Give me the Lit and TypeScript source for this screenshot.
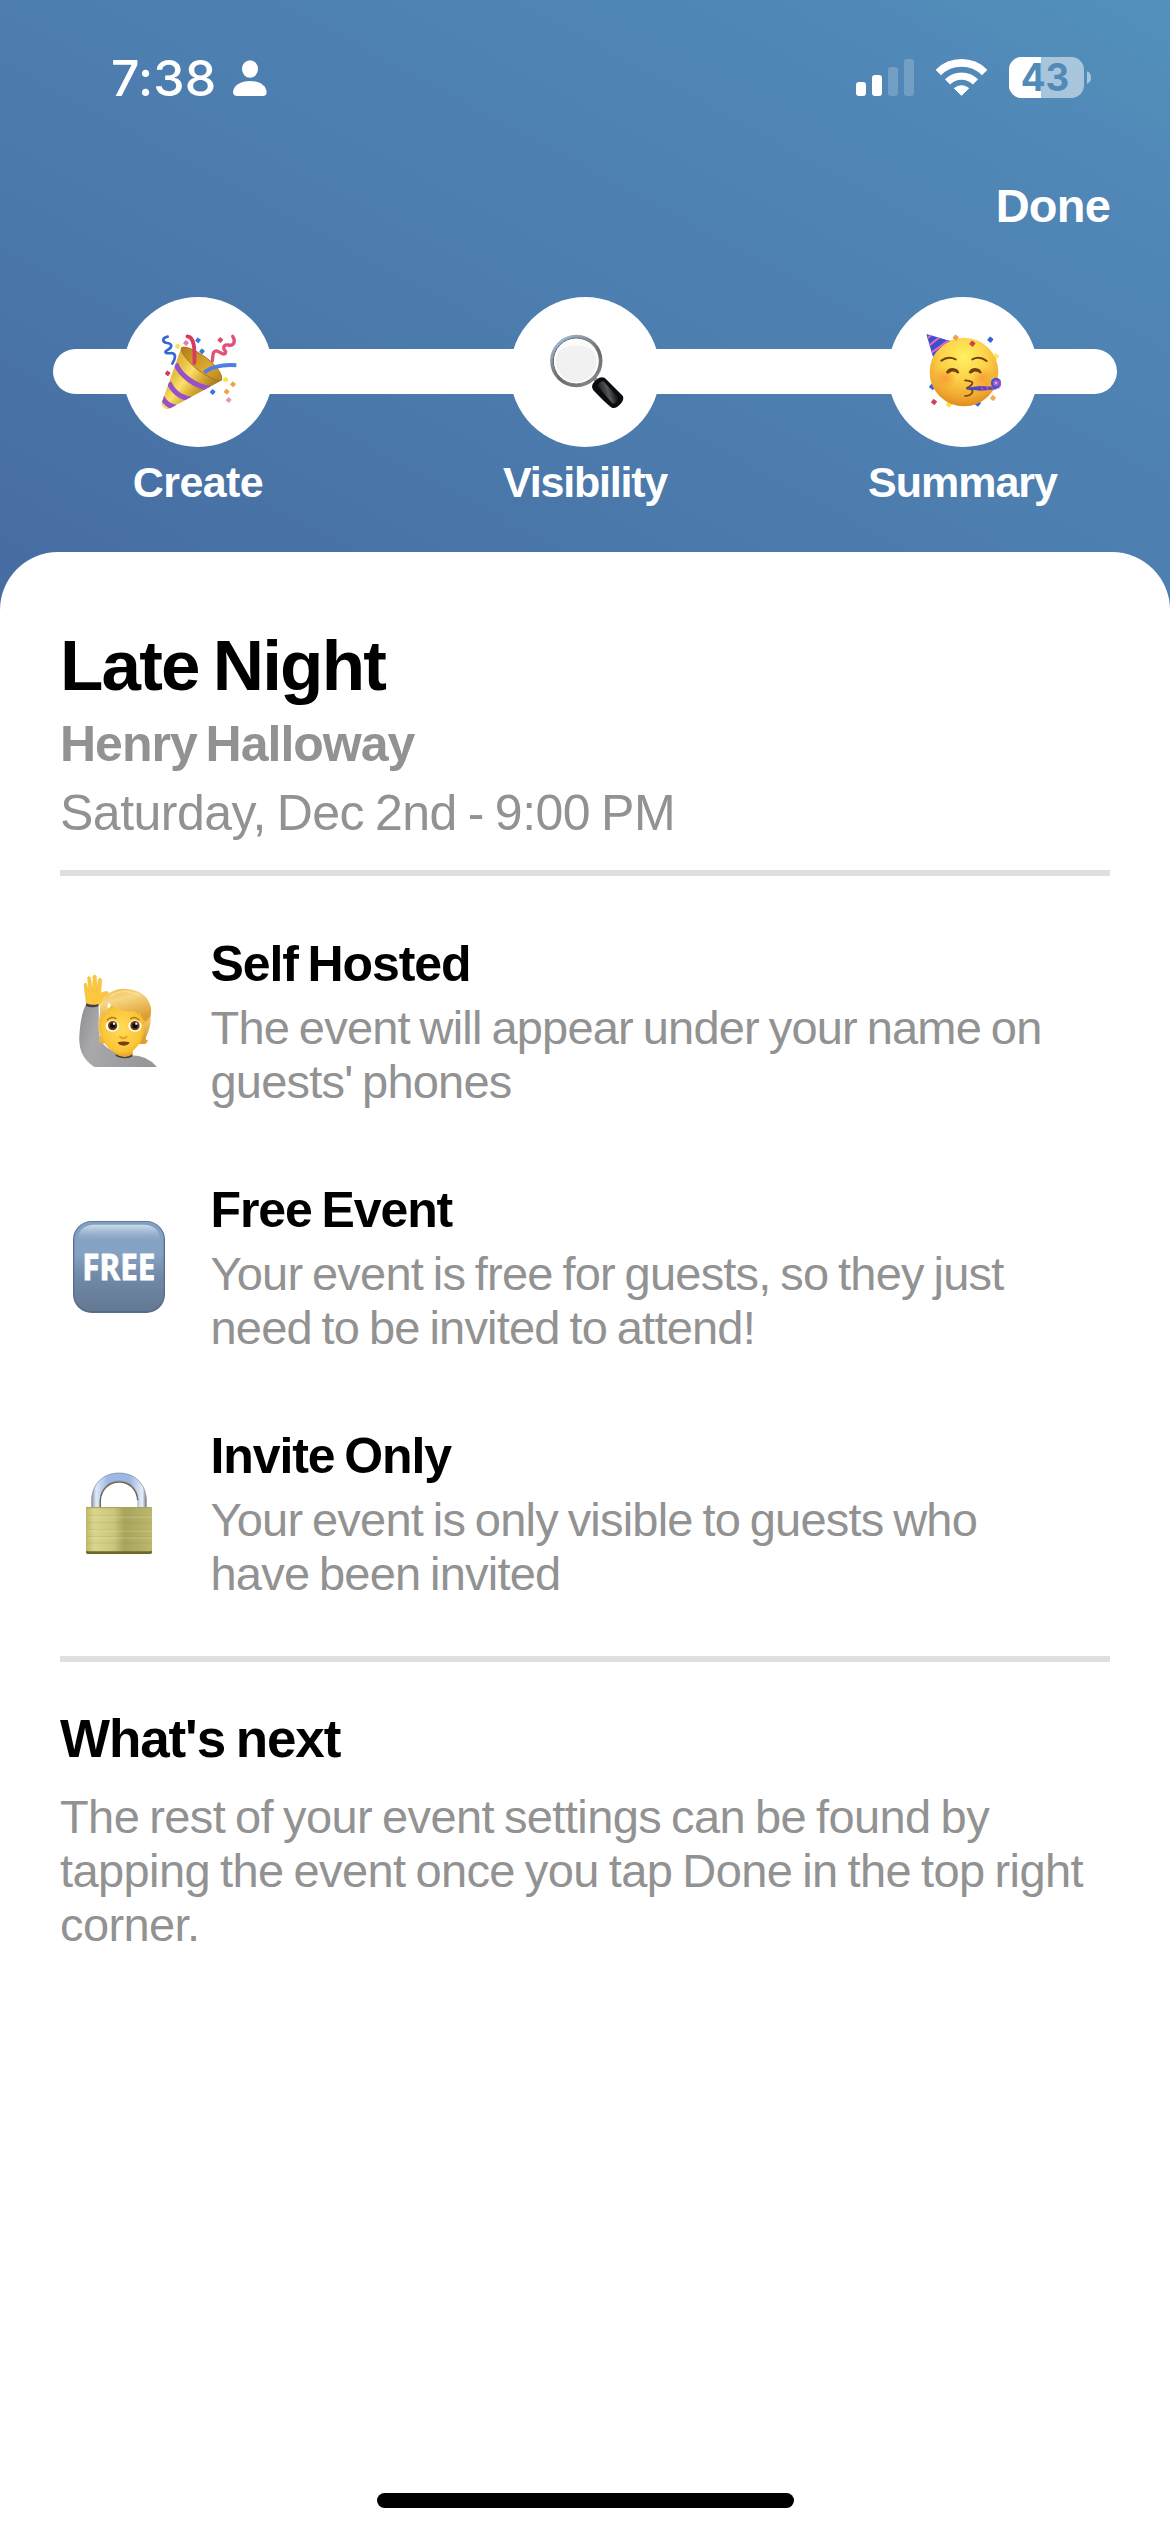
import { LitElement, html, css, svg } from "lit";
import { customElement } from "lit/decorators.js";

const confetti = (points: [number, number, string][], s = 12) =>
  points.map(
    ([x, y, c]) =>
      svg`<rect x=${x - s / 2} y=${y - s / 2} width=${s} height=${s} rx="2" fill=${c} transform="rotate(38 ${x} ${y})"></rect>`
  );

const popper = html`<svg class="art" viewBox="8 20 450 450">
  <defs>
    <linearGradient id="cone" x1="0" y1="0.1" x2="0.9" y2="0.8">
      <stop offset="0" stop-color="#c99524" />
      <stop offset="0.35" stop-color="#e9c244" />
      <stop offset="0.5" stop-color="#fbe06a" />
      <stop offset="0.68" stop-color="#d9ab33" />
      <stop offset="1" stop-color="#8d6312" />
    </linearGradient>
    <linearGradient id="mouth" x1="0" y1="0" x2="1" y2="1">
      <stop offset="0" stop-color="#b27c1c" />
      <stop offset="0.6" stop-color="#dca832" />
      <stop offset="1" stop-color="#b98320" />
    </linearGradient>
    <clipPath id="coneClip"><path d="M183 172 C196 215 250 262 302 271 L150 354 C138 360 122 350 124 337 Z" /></clipPath>
  </defs>
  <path d="M183 172 C196 215 250 262 302 271 L150 354 C138 360 122 350 124 337 Z" fill="url(#cone)" />
  <g clip-path="url(#coneClip)" fill="none" stroke="#9650cc" stroke-width="15">
    <path d="M166 220 C180 255 225 290 270 294" />
    <path d="M146 276 C156 302 180 322 212 326" />
    <path d="M124 318 C132 336 144 347 166 351" />
  </g>
  <path d="M183 172 C196 164 240 186 272 214 C296 236 308 258 303 270 C292 274 250 256 218 226 C198 206 180 184 183 172Z" fill="url(#mouth)" stroke="#a87517" stroke-width="3" />
  <path d="M201 138 C222 140 224 172 222 218" fill="none" stroke="#d93a5f" stroke-width="11" stroke-linecap="round" />
  <path d="M252 246 C274 230 308 222 348 225" fill="none" stroke="#4f7fe3" stroke-width="12" />
  <path d="M142 139 C126 142 124 156 140 158 C158 160 156 172 140 180 C128 188 140 190 154 188 C168 190 166 204 156 220" fill="none" stroke="#3566d6" stroke-width="8" stroke-linecap="round" />
  <path d="M337 138 C346 152 342 168 324 164 C306 162 308 176 316 184 C314 198 304 188 290 182 C276 180 278 196 276 212" fill="none" stroke="#e25277" stroke-width="10" stroke-linecap="round" />
  ${confetti([[172, 168, "#f8e04b"], [197, 158, "#ee7ba4"], [233, 150, "#3c78e0"], [245, 183, "#3c78e0"], [300, 149, "#dd4a6b"], [142, 249, "#d53d5c"], [316, 268, "#fae04c"], [338, 282, "#f3a03f"], [319, 304, "#f3a03f"], [277, 305, "#3b74dd"], [325, 329, "#ef8fc0"]], 13)}
</svg>`;

const magnifier = html`<svg class="art" viewBox="0 20 450 450">
  <defs>
    <linearGradient id="rim" x1="0.1" y1="0" x2="0.8" y2="1">
      <stop offset="0" stop-color="#9fc0ee" />
      <stop offset="0.3" stop-color="#8b949f" />
      <stop offset="0.6" stop-color="#66686b" />
      <stop offset="1" stop-color="#85878a" />
    </linearGradient>
    <linearGradient id="grip" x1="0" y1="0.6" x2="1" y2="0.3">
      <stop offset="0" stop-color="#08090a" />
      <stop offset="0.5" stop-color="#55585c" />
      <stop offset="0.8" stop-color="#17181a" />
      <stop offset="1" stop-color="#000" />
    </linearGradient>
  </defs>
  <path d="M250 262 L268 278" stroke="#8a8c8f" stroke-width="13" />
  <circle cx="199" cy="212" r="74" fill="#fff" stroke="url(#rim)" stroke-width="9" />
  <circle cx="199" cy="212" r="69" fill="#fdfdfd" stroke="#4b4e52" stroke-width="2.5" />
  <circle cx="199" cy="214" r="61" fill="#f1f1f2" />
  <path d="M147 182 A61 61 0 0 1 252 184 C222 160 180 160 147 182Z" fill="#fbfbfb" />
  <path d="M246 288 Q246 276 268 262 Q282 258 290 268 L338 316 Q344 326 332 340 Q318 356 306 352 Q298 350 250 300 Q246 294 246 288Z" fill="#0b0c0d" />
  <path d="M262 286 Q268 274 280 272 L326 322 Q320 338 308 340Z" fill="url(#grip)" />
</svg>`;

const partyFace = html`<svg class="art" viewBox="23 20 450 450">
  <defs>
    <radialGradient id="skin" cx="0.5" cy="0.28" r="0.75">
      <stop offset="0" stop-color="#fff05f" />
      <stop offset="0.45" stop-color="#fcd148" />
      <stop offset="0.8" stop-color="#f0a52f" />
      <stop offset="1" stop-color="#d98519" />
    </radialGradient>
    <radialGradient id="blush"><stop offset="0" stop-color="#f58a2c" stop-opacity="0.6" /><stop offset="1" stop-color="#f58a2c" stop-opacity="0" /></radialGradient>
    <clipPath id="hat"><path d="M138 131 L210 152 Q178 166 158 200 Z" /></clipPath>
  </defs>
  ${confetti([[156, 289, "#3568d4"], [206, 342, "#f8e04b"], [292, 339, "#3568d4"], [347, 198, "#fae868"]], 15)}
  <circle cx="251" cy="245" r="103" fill="url(#skin)" />
  <circle cx="196" cy="262" r="32" fill="url(#blush)" />
  <circle cx="306" cy="262" r="32" fill="url(#blush)" />
  <g clip-path="url(#hat)">
    <rect x="130" y="125" width="90" height="80" fill="#3b51c9" />
    <path d="M134 150 L160 128 M138 172 L186 134 M146 192 L214 144" stroke="#ee62c8" stroke-width="6" />
  </g>
  <g fill="none" stroke="#70400e" stroke-linecap="round">
    <path d="M183 211 Q203 196 226 207" stroke-width="6" />
    <path d="M276 207 Q298 196 319 212" stroke-width="6" />
  </g>
  <path d="M197 246 Q202 233 217 233 Q233 234 237 247 Q232 252 226 246 Q217 240 208 247 Q200 253 197 246Z" fill="#70400e" />
  <path d="M265 246 Q270 233 285 233 Q300 234 304 247 Q300 252 294 246 Q285 240 276 247 Q268 253 265 246Z" fill="#70400e" />
  <path d="M254 270 Q282 272 275 282 Q268 290 258 294 Q280 296 276 306 Q270 317 254 317" fill="none" stroke="#70400e" stroke-width="5" stroke-linecap="round" />
  <path d="M258 292 L300 287 L346 290 L350 297 L300 301 L262 297Z" fill="#4848c4" />
  <path d="M302 288 l6 12 M318 288 l6 11 M334 289 l5 10" stroke="#c944a9" stroke-width="5" />
  <circle cx="347" cy="278" r="12" fill="#8b7ae0" stroke="#3f57c8" stroke-width="7" />
  <circle cx="347" cy="278" r="5" fill="#f39ad0" stroke="#d84fb0" stroke-width="3" />
  <path d="M357 268 Q366 284 352 295" fill="none" stroke="#b94ec0" stroke-width="4" />
  ${confetti([[226, 142, "#f3a04a"], [276, 160, "#d63c50"], [330, 148, "#3764cf"], [338, 323, "#f7a852"], [161, 335, "#d13d5b"]], 14)}
</svg>`;

const raisingHand = html`<svg class="art" viewBox="0 0 360 360">
  <defs>
    <linearGradient id="sleeve" x1="0" y1="0" x2="1" y2="0.25">
      <stop offset="0" stop-color="#8d8d90" />
      <stop offset="0.3" stop-color="#a9a9ab" />
      <stop offset="1" stop-color="#97979a" />
    </linearGradient>
    <radialGradient id="face" cx="0.5" cy="0.5" r="0.6">
      <stop offset="0" stop-color="#ffdc57" />
      <stop offset="0.7" stop-color="#fbc638" />
      <stop offset="1" stop-color="#eaa423" />
    </radialGradient>
    <linearGradient id="hair" x1="0" y1="0" x2="0.4" y2="1">
      <stop offset="0" stop-color="#efb949" />
      <stop offset="0.4" stop-color="#f8d684" />
      <stop offset="1" stop-color="#dd9f32" />
    </linearGradient>
  </defs>
  <path d="M80 134 L72 76 Q72 68 79 70 L86 94 L83 54 Q84 46 91 52 L98 92 L99 48 Q104 42 109 49 L110 92 L115 58 Q120 50 125 59 L122 100 Q134 92 145 96 Q146 102 134 110 Q124 132 112 140Z" fill="#fbc83d" stroke="#eeb12a" stroke-width="1.5" />
  <path d="M79 132 Q96 144 116 134 L117 220 Q120 256 160 274 Q180 290 208 286 Q260 284 291 321 L103 321 Q54 290 58 228 Q62 160 79 132Z" fill="url(#sleeve)" />
  <path d="M79 130 Q96 138 115 132 L115 139 Q96 145 78 138Z" fill="#3b3e46" />
  <path d="M122 150 Q110 200 120 230 Q110 250 126 250 L250 252 Q260 254 264 240 Q256 244 258 232 Q276 196 272 150Z" fill="url(#hair)" />
  <path d="M164 270 L166 284 Q196 302 218 284 L218 266Z" fill="#edab2b" />
  <path d="M166 282 Q196 300 218 282 L216 290 Q192 300 168 289Z" fill="#3f4249" />
  <path d="M128 164 Q118 178 117 196 Q120 242 148 266 Q188 298 224 268 Q248 246 253 206 Q258 166 240 150 L160 130Z" fill="url(#face)" />
  <path d="M122 166 Q112 120 146 100 Q166 86 190 86 Q262 88 273 144 Q276 170 258 186 Q246 178 240 156 L236 164 Q232 158 220 154 Q174 158 145 128 Q138 140 150 164 Q136 154 122 166Z" fill="url(#hair)" />
  <path d="M152 108 Q190 82 236 106" fill="none" stroke="#fde2a3" stroke-width="5" opacity="0.7" />
  <path d="M142 180 Q153 168 168 176 M212 176 Q226 168 237 180" fill="none" stroke="#b4781c" stroke-width="4.5" stroke-linecap="round" />
  <ellipse cx="157" cy="198" rx="20" ry="17" fill="#fff" />
  <ellipse cx="225" cy="198" rx="20" ry="17" fill="#fff" />
  <circle cx="158" cy="197" r="14" fill="#6b3c18" /><circle cx="225" cy="197" r="14" fill="#6b3c18" />
  <circle cx="158" cy="197" r="8" fill="#100904" /><circle cx="225" cy="197" r="8" fill="#100904" />
  <circle cx="162" cy="191" r="3.5" fill="#fff" /><circle cx="229" cy="191" r="3.5" fill="#fff" />
  <path d="M180 230 Q190 240 200 230" fill="none" stroke="#e39b22" stroke-width="5" stroke-linecap="round" />
  <path d="M173 247 Q191 242 209 247 Q205 257 191 257 Q177 257 173 247Z" fill="#7a3b10" />
</svg>`;

const freeBadge = html`<svg class="art" viewBox="0 3 360 360">
  <defs>
    <linearGradient id="tile" x1="0" y1="0" x2="0" y2="1">
      <stop offset="0" stop-color="#7f9fc4" />
      <stop offset="0.35" stop-color="#86a3c4" />
      <stop offset="0.62" stop-color="#7089a8" />
      <stop offset="1" stop-color="#647993" />
    </linearGradient>
    <linearGradient id="gloss" x1="0" y1="0" x2="0" y2="1">
      <stop offset="0" stop-color="#d3dfec" stop-opacity="0.95" />
      <stop offset="1" stop-color="#a9c0db" stop-opacity="0" />
    </linearGradient>
  </defs>
  <rect x="39" y="48" width="276" height="276" rx="56" fill="#566d8c" />
  <rect x="43" y="50" width="268" height="268" rx="52" fill="url(#tile)" />
  <path d="M54 108 Q54 62 100 59 L254 59 Q300 62 300 108 Q240 102 177 102 Q114 102 54 108Z" fill="url(#gloss)" />
  <text class="free" x="67" y="224" textLength="219" lengthAdjust="spacingAndGlyphs">FREE</text>
</svg>`;

const padlock = html`<svg class="art" viewBox="0 -9 360 360">
  <defs>
    <linearGradient id="brass" x1="0" y1="0" x2="1" y2="0">
      <stop offset="0" stop-color="#bdb867" />
      <stop offset="0.12" stop-color="#d9d58e" />
      <stop offset="0.42" stop-color="#cbc67c" />
      <stop offset="0.58" stop-color="#a8a45e" />
      <stop offset="1" stop-color="#bcb76c" />
    </linearGradient>
    <linearGradient id="steel" x1="0" y1="0" x2="1" y2="0">
      <stop offset="0" stop-color="#8d949e" />
      <stop offset="0.08" stop-color="#dfe9fa" />
      <stop offset="0.3" stop-color="#9db8e6" />
      <stop offset="0.7" stop-color="#9db8e6" />
      <stop offset="0.93" stop-color="#e6edf8" />
      <stop offset="1" stop-color="#73787f" />
    </linearGradient>
  </defs>
  <path d="M95 160 L95 134 C97 84 132 54 177 54 C222 54 257 84 259 134 L259 160 L234 160 L234 136 C232 100 208 78 177 78 C146 78 122 100 120 136 L120 160Z" fill="url(#steel)" stroke="#7f858d" stroke-width="2" />
  <path d="M121 158 L121 136 C123 102 148 81 177 81 C208 81 231 102 233 136" fill="none" stroke="#6e6751" stroke-width="4" />
  <rect x="78" y="156" width="198" height="141" rx="5" fill="#6f6a2c" />
  <rect x="78" y="156" width="198" height="133" rx="4" fill="url(#brass)" />
  <path d="M79 158 H275" stroke="#a8a253" stroke-width="3" />
  <path d="M80 182 H274 M80 203 H274 M80 224 H274 M80 245 H274 M80 264 H274" stroke="#8e8943" stroke-opacity="0.28" stroke-width="2" />
  <path d="M80 186 H274 M80 228 H274 M80 249 H274" stroke="#f3f0b4" stroke-opacity="0.3" stroke-width="3" />
</svg>`;

const steps = [
  { art: popper, label: "Create", cls: "create" },
  { art: magnifier, label: "Visibility", cls: "visibility" },
  { art: partyFace, label: "Summary", cls: "summary" },
];

const details = [
  { art: raisingHand, title: "Self Hosted", lines: ["The event will appear under your name on", "guests' phones"], cls: "hosted" },
  { art: freeBadge, title: "Free Event", lines: ["Your event is free for guests, so they just", "need to be invited to attend!"], cls: "cost" },
  { art: padlock, title: "Invite Only", lines: ["Your event is only visible to guests who", "have been invited"], cls: "access" },
];

@customElement("app-root")
export class AppRoot extends LitElement {
  static styles = css`
    :host {
      display: block;
      width: 1170px;
      height: 2532px;
      overflow: hidden;
      font-family: "Liberation Sans", Arial, sans-serif;
      color: #000;
    }
    .screen {
      box-sizing: border-box;
      height: 2532px;
      display: flex;
      flex-direction: column;
      background: linear-gradient(to top right, #466ba1, #4c7dae 48%, #5087b6 82%, #5391bc) 0 0 / 1170px 630px no-repeat #fff;
    }
    .status {
      display: flex;
      justify-content: space-between;
      align-items: center;
      padding: 57px 79px 0 111px;
      height: 41px;
      color: #fff;
    }
    .clock { display: flex; align-items: center; gap: 17px; }
    .time { font: 500 50px/42px Inter, sans-serif; letter-spacing: 0.1px; }
    .person { width: 34px; height: 36px; }
    .radios { display: flex; gap: 22px; }
    .signal { width: 58px; height: 41px; }
    .wifi { width: 51px; height: 41px; }
    .battery { width: 82px; height: 41px; overflow: visible; }
    .level { font: 700 114px Inter, sans-serif; fill: #508ab8; }
    .nav { display: flex; justify-content: flex-end; padding: 81px 60px 0 0; height: 53px; }
    .done { font-weight: 700; font-size: 47px; line-height: 54px; color: #fff; letter-spacing: -0.8px; white-space: nowrap; }
    .steps {
      display: grid;
      grid-template-columns: 290px 484px 271px;
      margin: 65px 53px 0;
      height: 255px;
      position: relative;
    }
    .track { position: absolute; left: 0; right: 0; top: 52px; height: 45px; border-radius: 23px; background: #fff; }
    .step { position: relative; display: flex; flex-direction: column; align-items: center; }
    .disc { width: 150px; height: 150px; border-radius: 50%; background: #fff; }
    .art { display: block; width: 100%; height: 100%; }
    .label { margin-top: 11px; font-weight: 700; font-size: 43px; line-height: 48px; color: #fff; white-space: nowrap; letter-spacing: -0.6px; }
    .visibility .label { letter-spacing: -1.2px; }
    .summary .label { letter-spacing: -1px; }
    .panel {
      flex: 1;
      display: flex;
      flex-direction: column;
      background: #fff;
      border-radius: 58px 58px 0 0;
      padding: 74px 60px 24px;
    }
    .title { margin: 0; font-weight: 700; font-size: 71px; line-height: 80px; letter-spacing: -1.8px; word-spacing: -4px; }
    .host { margin-top: 8px; font-weight: 700; font-size: 50px; line-height: 60px; letter-spacing: -1px; word-spacing: -4px; color: #929292; }
    .date { margin-top: 9px; font-size: 50px; line-height: 60px; letter-spacing: -0.5px; word-spacing: -2.5px; color: #929292; }
    .rule { height: 6px; background: #dfdfdf; flex: none; }
    .top-rule { margin-top: 27px; }
    .details { display: grid; grid-auto-rows: 246px; height: 780px; box-sizing: border-box; padding-top: 58px; }
    .item { display: flex; gap: 30.5px; white-space: nowrap; }
    .icon { width: 120px; height: 120px; margin-top: 26px; }
    .free { font: 700 106px "Noto Sans", sans-serif; fill: #fff; stroke: #fff; stroke-width: 2.5px; }
    .name { margin: 0; font-weight: 700; font-size: 50px; line-height: 60px; letter-spacing: -1.1px; word-spacing: -3px; }
    .copy { margin: 0; margin-top: 7px; font-size: 47px; line-height: 54px; color: #929292; letter-spacing: -0.8px; word-spacing: -2.5px; white-space: nowrap; }
    .line { display: block; }
    .next { margin: 47px 0 0; font-weight: 700; font-size: 53px; line-height: 60px; letter-spacing: -1.1px; word-spacing: -3px; }
    .next-copy { margin-top: 21px; letter-spacing: -0.6px; }
    .home { margin-top: auto; align-self: center; width: 417px; height: 15px; border-radius: 8px; background: #000; }
  `;

  render() {
    return html`<div class="screen">
      <div class="status">
        <div class="clock">
          <span class="time">7:38</span>
          <svg class="person" viewBox="461 60 102 108">
            <ellipse cx="512" cy="87" rx="24" ry="26.500" fill="#fff" />
            <path d="M474 168 Q461 168 461 156 C463 136 484 123 512 123 C540 123 560 136 562 156 Q562 168 550 168Z" fill="#fff" />
          </svg>
        </div>
        <div class="radios">
          <svg class="signal" viewBox="48 51 174 123" fill="#fff">
            <rect x="48" y="126" width="30" height="42" rx="9" />
            <rect x="96" y="105" width="30" height="63" rx="9" />
            <rect x="144" y="81" width="30" height="87" rx="9" opacity="0.2" />
            <rect x="192" y="57" width="30" height="111" rx="9" opacity="0.2" />
          </svg>
          <svg class="wifi" viewBox="288 51 153 123" fill="none" stroke="#fff">
            <path d="M295 97.500 A98.500 98.500 0 0 1 434 97.500" stroke-width="23" />
            <path d="M322.500 125.500 A59.500 59.500 0 0 1 406.500 125.500" stroke-width="22" />
            <path d="M364.500 166 L343 145 A33 33 0 0 1 386 145Z" fill="#fff" stroke-width="3" stroke-linejoin="round" />
          </svg>
          <svg class="battery" viewBox="507 51 246 123">
            <defs><clipPath id="cell"><rect x="507" y="51" width="225" height="123" rx="38" /></clipPath></defs>
            <g clip-path="url(#cell)">
              <rect x="507" y="51" width="225" height="123" fill="#fff" opacity="0.5" />
              <rect x="507" y="51" width="96" height="123" fill="#fff" />
            </g>
            <path d="M741 94 Q753 99 753 113 Q753 126 741 131Z" fill="#fff" opacity="0.5" />
            <text class="level" x="542" y="154" textLength="146" lengthAdjust="spacingAndGlyphs">43</text>
          </svg>
        </div>
      </div>
      <div class="nav"><span class="done">Done</span></div>
      <div class="steps">
        <div class="track"></div>
        ${steps.map(
          (s) => html`<div class="step ${s.cls}"><div class="disc">${s.art}</div><span class="label">${s.label}</span></div>`
        )}
      </div>
      <main class="panel">
        <h1 class="title">Late Night</h1>
        <div class="host">Henry Halloway</div>
        <div class="date">Saturday, Dec 2nd - 9:00 PM</div>
        <div class="rule top-rule"></div>
        <section class="details">
          ${details.map(
            (d) => html`<div class="item ${d.cls}">
              <div class="icon">${d.art}</div>
              <div>
                <h2 class="name">${d.title}</h2>
                <p class="copy">${d.lines.map((l) => html`<span class="line">${l}</span>`)}</p>
              </div>
            </div>`
          )}
        </section>
        <div class="rule"></div>
        <h2 class="next">What's next</h2>
        <p class="copy next-copy">
          <span class="line">The rest of your event settings can be found by</span>
          <span class="line">tapping the event once you tap Done in the top right</span>
          <span class="line">corner.</span>
        </p>
        <div class="home"></div>
      </main>
    </div>`;
  }
}
